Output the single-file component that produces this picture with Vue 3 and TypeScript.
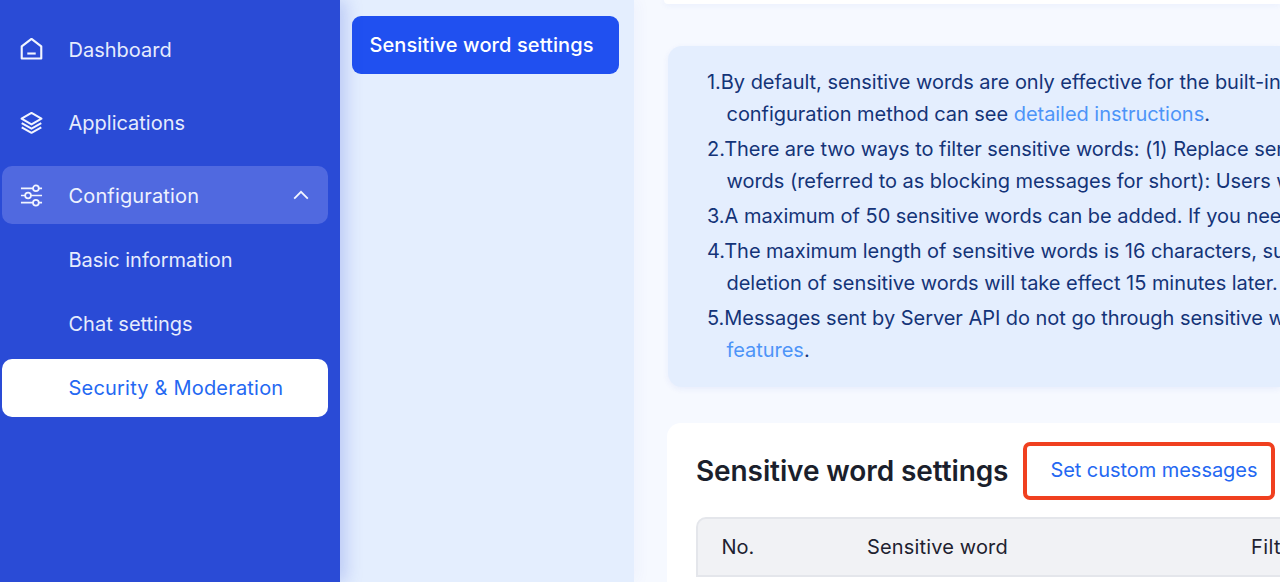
<script setup lang="ts">
interface NavItem { label: string; icon?: string; kind?: string }
const top: NavItem[] = [
  { label: 'Dashboard', icon: 'home' },
  { label: 'Applications', icon: 'layers' },
]
const subs: NavItem[] = [
  { label: 'Basic information' },
  { label: 'Chat settings' },
  { label: 'Security & Moderation', kind: 'active' },
]
</script>

<template>
  <div class="page">
    <aside class="sidebar">
      <nav class="nav">
        <a v-for="item in top" :key="item.label" class="nav-item">
          <svg v-if="item.icon === 'home'" class="icon" viewBox="0 0 24 24" fill="none" stroke="currentColor" stroke-width="2.2" stroke-linejoin="round">
            <path d="M1.8 8.8 12 .9 22.2 8.8V21.4H1.8Z" />
            <path d="M7.6 16.2h8.8" />
          </svg>
          <svg v-else class="icon" viewBox="0 0 24 24" fill="none" stroke="currentColor" stroke-width="2.1" stroke-linejoin="round">
            <path d="M12 2 22.4 8 12 14 1.6 8Z" />
            <path d="M1.8 12.6 12 18.4 22.2 12.6" />
            <path d="M1.8 17 12 22.8 22.2 17" />
          </svg>
          <span class="label">{{ item.label }}</span>
        </a>
        <a class="nav-item open">
          <svg class="icon" viewBox="0 0 24 24" fill="none" stroke="currentColor" stroke-width="1.8">
            <path d="M1 4.5h12.6M19.6 4.5H23M1 12h4.4M11.4 12H23M1 19.5h12.6M19.6 19.5H23" />
            <circle cx="16.6" cy="4.5" r="3" />
            <circle cx="8.4" cy="12" r="3" />
            <circle cx="16.6" cy="19.5" r="3" />
          </svg>
          <span class="label">Configuration</span>
          <svg class="chevron" viewBox="0 0 16 10" fill="none" stroke="currentColor" stroke-width="1.8">
            <path d="M1.2 8.6 8 1.8 14.8 8.6" />
          </svg>
        </a>
        <div class="subs">
          <a v-for="s in subs" :key="s.label" class="sub-item" :class="s.kind">{{ s.label }}</a>
        </div>
      </nav>
    </aside>

    <section class="subnav">
      <a class="subnav-btn">Sensitive word settings</a>
    </section>

    <main class="main">
      <div class="top-card"></div>
      <div class="notice">
        <p>1.By default, sensitive words are only effective for the built-in<br /><span class="indent">configuration method can see <a class="link">detailed instructions</a>.</span></p>
        <p>2.There are two ways to filter sensitive words: (1) Replace sensitive<br /><span class="indent">words (referred to as blocking messages for short): Users will</span></p>
        <p>3.A maximum of 50 sensitive words can be added. If you need</p>
        <p>4.The maximum length of sensitive words is 16 characters, subject<br /><span class="indent">deletion of sensitive words will take effect 15 minutes later.</span></p>
        <p>5.Messages sent by Server API do not go through sensitive word<br /><span class="indent"><a class="link">features</a>.</span></p>
      </div>
      <div class="card">
        <div class="card-head">
          <h2>Sensitive word settings</h2>
          <a class="custom">Set custom messages</a>
        </div>
        <div class="table">
          <div class="thead">
            <span class="col-no">No.</span>
            <span class="col-word">Sensitive word</span>
            <span class="col-filter">Filter</span>
          </div>
        </div>
      </div>
    </main>
  </div>
</template>

<style>
html, body { margin: 0; overflow: hidden; }
</style>

<style scoped>
.page {
  display: flex;
  width: 1280px;
  height: 582px;
  overflow: hidden;
  font-family: Inter, "Liberation Sans", sans-serif;
  font-size: 20px;
  background: #f6f9ff;
}
.sidebar {
  flex: 0 0 340px;
  background: #2a4bd6;
  padding: 20px 12px 0 1.5px;
  box-sizing: border-box;
  position: relative;
  z-index: 2;
  box-shadow: 6px 0 16px rgba(42, 75, 214, 0.22);
}
.nav { display: flex; flex-direction: column; gap: 15px; }
.nav-item {
  display: flex;
  align-items: center;
  height: 58px;
  padding: 0 19px 0 18.5px;
  border-radius: 10px;
  color: #e6ecfd;
}
.label { padding-top: 2px; margin-left: -0.5px; }
.nav-item.open { background: #5069e0; color: #eef2fe; }
.nav-item.open .label { letter-spacing: 0.15px; }
.icon { width: 23px; height: 23px; margin-right: 26px; flex: none; color: #f2f5ff; }
.chevron { width: 16px; height: 10px; margin-left: auto; color: #f2f5ff; }
.subs { display: flex; flex-direction: column; margin-top: -8px; gap: 6px; }
.sub-item {
  display: flex;
  align-items: center;
  height: 58px;
  padding-left: 67px;
  border-radius: 10px;
  color: #e6ecfd;
}
.sub-item.active { background: #fff; color: #2468f2; letter-spacing: 0.2px; }
.subnav {
  flex: 0 0 294px;
  background: #e4eefe;
  padding: 16px 15px 0 12px;
  box-sizing: border-box;
  position: relative;
  z-index: 1;
  box-shadow: 4px 0 14px rgba(42, 75, 214, 0.04);
}
.subnav-btn {
  display: flex;
  align-items: center;
  height: 58px;
  padding-left: 17.5px;
  border-radius: 9px;
  background: #2050f0;
  color: #fff;
  font-weight: 500;
  letter-spacing: 0.1px;
}
.main {
  flex: 1;
  min-width: 0;
  padding-left: 33px;
  overflow: hidden;
  white-space: nowrap;
}
.top-card {
  height: 4px;
  margin-left: -3px;
  background: #fff;
  border-radius: 0 0 0 10px;
  box-shadow: 0 1px 6px rgba(42, 75, 214, 0.08);
}
.notice {
  margin-top: 42px;
  margin-left: 1px;
  height: 341px;
  box-sizing: border-box;
  padding: 20px 0 0 39px;
  background: #e4eefe;
  border-radius: 14px 0 0 14px;
  box-shadow: 0 2px 6px rgba(42, 75, 214, 0.07);
  color: #143478;
  line-height: 32px;
  letter-spacing: -0.04px;
  display: flex;
  flex-direction: column;
  gap: 3px;
}
.notice p { margin: 0; }
.indent { margin-left: 19.5px; }
.link { color: #4d94f8; }
.card {
  margin-top: 36px;
  background: #fff;
  border-radius: 14px 0 0 0;
  padding: 25px 0 0 29px;
  height: 200px;
}
.card-head { display: flex; align-items: center; height: 46px; }
h2 {
  margin: 0;
  font-size: 28px;
  line-height: 44px;
  font-weight: 600;
  letter-spacing: -0.1px;
  color: #1b1f2c;
}
.custom {
  margin-left: 15px;
  box-sizing: border-box;
  width: 252px;
  height: 58px;
  display: flex;
  align-items: center;
  padding: 0 0 2px 23px;
  border: 4px solid #f0401f;
  border-radius: 7px;
  color: #2468f2;
  letter-spacing: -0.05px;
}
.table {
  margin-top: 23px;
  background: #f1f2f5;
  border: 2px solid #e4e6eb;
  border-right: 0;
  border-radius: 10px 0 0 0;
}
.thead {
  display: flex;
  align-items: center;
  height: 56px;
  color: #1e2230;
}
.col-no { flex: none; margin-left: 23.5px; width: 145.5px; }
.col-word { flex: none; width: 384px; letter-spacing: 0.15px; }
.col-filter { flex: none; letter-spacing: 0.4px; }
</style>
